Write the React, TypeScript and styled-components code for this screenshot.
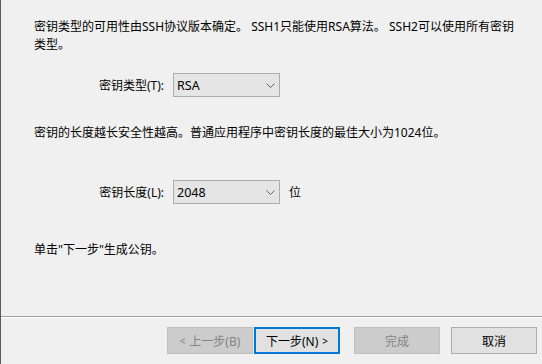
import React from "react";
import styled, { createGlobalStyle } from "styled-components";

const Global = createGlobalStyle`
  html, body { margin: 0; padding: 0; background: #f0f0f0; }
  body { font-family: "Noto Sans", "Noto Sans CJK SC", sans-serif; font-size: 12px; color: #000; }
`;

const Window = styled.div`
  width: 542px;
  height: 364px;
  box-sizing: border-box;
  border-left: 1px solid #5a5a5a;
  background: #f0f0f0;
  display: flex;
  flex-direction: column;
  overflow: hidden;
`;

const Content = styled.div`
  flex: 1;
  padding: 18px 0 0 33px;
  display: flex;
  flex-direction: column;
`;

const Para = styled.p<{ $top?: number }>`
  margin: ${(p) => p.$top ?? 0}px 0 0;
  line-height: 18px;
  white-space: nowrap;
`;

const FieldRow = styled.div<{ $top: number }>`
  margin-top: ${(p) => p.$top}px;
  display: flex;
  align-items: center;
  height: 24px;
`;

const Label = styled.label`
  width: 130px;
  text-align: right;
  margin-right: 9px;
  white-space: nowrap;
`;

const Combo = styled.div`
  width: 107px;
  height: 24px;
  box-sizing: border-box;
  border: 1px solid #acacac;
  background: #e5e5e5;
  display: flex;
  align-items: center;
  justify-content: space-between;
  padding: 0 4px 0 3px;
  font-size: 12.5px;
`;

const Unit = styled.span`
  margin-left: 9px;
`;

const Separator = styled.div`
  height: 1px;
  background: #a0a0a0;
  border-bottom: 1px solid #ffffff;
`;

const ButtonBar = styled.div`
  display: flex;
  justify-content: flex-end;
  align-items: center;
  padding: 9px 5px 10px 0;
`;

const Btn = styled.button<{ $disabled?: boolean; $default?: boolean; $gap?: number }>`
  width: 86px;
  height: 27px;
  margin-left: ${(p) => p.$gap ?? 0}px;
  box-sizing: border-box;
  font-family: "Noto Sans", "Noto Sans CJK SC", sans-serif;
  font-size: 12px;
  padding: 0;
  display: flex;
  align-items: center;
  justify-content: center;
  gap: 4px;
  background: ${(p) => (p.$disabled ? "#cccccc" : "#e1e1e1")};
  color: ${(p) => (p.$disabled ? "#838383" : "#000")};
  border: ${(p) =>
    p.$default ? "2px solid #0078d7" : p.$disabled ? "1px solid #bfbfbf" : "1px solid #adadad"};
`;

const Arrow = styled.span`
  font-size: 10px;
`;

const Chevron = () => (
  <svg width="9" height="5" viewBox="0 0 9 5">
    <path d="M0.5 0.5 L4.5 4.5 L8.5 0.5" fill="none" stroke="#606060" strokeWidth="1" />
  </svg>
);

export default function App() {
  return (
    <>
      <Global />
      <Window>
        <Content>
          <Para>
            密钥类型的可用性由SSH协议版本确定。 SSH1只能使用RSA算法。 SSH2可以使用所有密钥
            <br />
            类型。
          </Para>
          <FieldRow $top={19}>
            <Label>密钥类型(T):</Label>
            <Combo>
              <span>RSA</span>
              <Chevron />
            </Combo>
          </FieldRow>
          <Para $top={27}>密钥的长度越长安全性越高。普通应用程序中密钥长度的最佳大小为1024位。</Para>
          <FieldRow $top={38}>
            <Label>密钥长度(L):</Label>
            <Combo>
              <span>2048</span>
              <Chevron />
            </Combo>
            <Unit>位</Unit>
          </FieldRow>
          <Para $top={37}>单击"下一步"生成公钥。</Para>
        </Content>
        <Separator />
        <ButtonBar>
          <Btn $disabled>
            <Arrow>&lt;</Arrow>上一步(B)
          </Btn>
          <Btn $default $gap={1}>
            下一步(N)<Arrow>&gt;</Arrow>
          </Btn>
          <Btn $disabled $gap={14}>完成</Btn>
          <Btn $gap={11}>取消</Btn>
        </ButtonBar>
      </Window>
    </>
  );
}
